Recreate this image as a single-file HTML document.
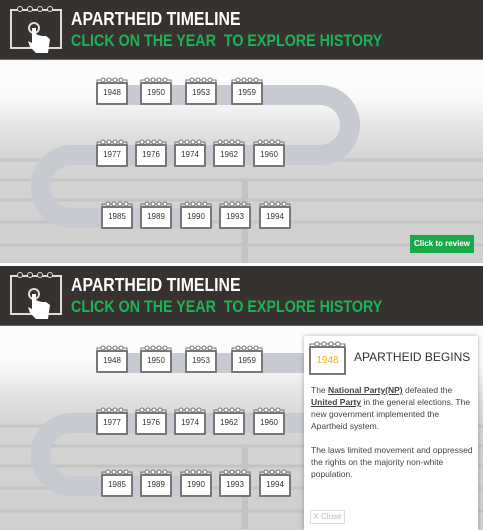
<!DOCTYPE html>
<html><head><style>
*{margin:0;padding:0;box-sizing:border-box}
body{width:483px;height:530px;background:#fff;font-family:"Liberation Sans",sans-serif;position:relative;overflow:hidden}
.panel{position:absolute;left:0;width:483px;height:263px;overflow:hidden;background:linear-gradient(#fff 0,#fbfbfb 95px,#e2e2e2 130px,#d4d4d4 160px,#cfcfcf 100%)}
.hdr{position:absolute;left:0;top:0;width:483px;height:60px;background:#353230;border-bottom:1px solid #5a6a8a}
.t1{position:absolute;left:71px;top:9px;color:#fff;font-weight:bold;font-size:18px;transform:scaleX(.88);transform-origin:left;white-space:nowrap}
.t2{position:absolute;left:71px;top:31px;color:#1db355;font-weight:bold;font-size:17px;transform:scaleX(.84);transform-origin:left;white-space:nowrap}
.cal{position:absolute;width:32px;height:28px}
.cal .b{position:absolute;left:0;top:5px;width:32px;height:23px;border:2px solid #777;background:#fff;font-size:8px;text-align:center;line-height:18px;color:#333;border-radius:1px}
.cal svg{position:absolute;left:0;top:0}
</style></head><body>

<svg width="0" height="0" style="position:absolute"><defs>
<g id="rings"><path d="M1 6 V3 H31 V6" fill="none" stroke="#777" stroke-width="1"/><circle cx="7" cy="3" r="2" fill="#fff" stroke="#777"/><circle cx="13" cy="3" r="2" fill="#fff" stroke="#777"/><circle cx="19" cy="3" r="2" fill="#fff" stroke="#777"/><circle cx="25" cy="3" r="2" fill="#fff" stroke="#777"/></g>
</defs></svg>

<div class="panel" style="top:0">
<svg width="483" height="263" style="position:absolute;left:0;top:0">
<g stroke="#bcbcbc" stroke-width="3" opacity=".6">
<line x1="0" y1="160" x2="483" y2="160"/><line x1="0" y1="180" x2="483" y2="180"/><line x1="0" y1="200" x2="483" y2="200"/><line x1="0" y1="222" x2="483" y2="222"/><line x1="0" y1="245" x2="483" y2="245"/>
<line x1="245" y1="180" x2="245" y2="263" stroke-width="6"/>
</g>
<path d="M110 95 H320 A30 30 0 0 1 320 155 H72 A31.5 31.5 0 0 0 72 218 H200" fill="none" stroke="#c8cad2" stroke-width="20"/>
</svg>
<div class="hdr"><svg width="60" height="55" style="position:absolute;left:8px;top:3px"><rect x="3" y="7" width="50" height="38" fill="none" stroke="#ddd" stroke-width="2"/><path d="M3 7 H53" stroke="#ddd"/><circle cx="12" cy="6" r="2.5" fill="#353230" stroke="#ddd"/><circle cx="22" cy="6" r="2.5" fill="#353230" stroke="#ddd"/><circle cx="32" cy="6" r="2.5" fill="#353230" stroke="#ddd"/><circle cx="42" cy="6" r="2.5" fill="#353230" stroke="#ddd"/><circle cx="26" cy="25" r="5" fill="none" stroke="#ddd" stroke-width="2"/><path d="M24 25 V40 L20 38 L22 44 L28 50 H40 L42 36 L38 33 L34 33 L30 32 L28 31 V25 Z" fill="#fff"/></svg>
<div class="t1">APARTHEID TIMELINE</div><div class="t2">CLICK ON THE YEAR&nbsp; TO EXPLORE HISTORY</div></div>
<div class="cal" style="left:96px;top:77px"><div class="b">1948</div><svg width="32" height="8"><use href="#rings"/></svg></div>
<div class="cal" style="left:140px;top:77px"><div class="b">1950</div><svg width="32" height="8"><use href="#rings"/></svg></div>
<div class="cal" style="left:185px;top:77px"><div class="b">1953</div><svg width="32" height="8"><use href="#rings"/></svg></div>
<div class="cal" style="left:231px;top:77px"><div class="b">1959</div><svg width="32" height="8"><use href="#rings"/></svg></div>
<div class="cal" style="left:96px;top:139px"><div class="b">1977</div><svg width="32" height="8"><use href="#rings"/></svg></div>
<div class="cal" style="left:135px;top:139px"><div class="b">1976</div><svg width="32" height="8"><use href="#rings"/></svg></div>
<div class="cal" style="left:174px;top:139px"><div class="b">1974</div><svg width="32" height="8"><use href="#rings"/></svg></div>
<div class="cal" style="left:213px;top:139px"><div class="b">1962</div><svg width="32" height="8"><use href="#rings"/></svg></div>
<div class="cal" style="left:253px;top:139px"><div class="b">1960</div><svg width="32" height="8"><use href="#rings"/></svg></div>
<div class="cal" style="left:101px;top:201px"><div class="b">1985</div><svg width="32" height="8"><use href="#rings"/></svg></div>
<div class="cal" style="left:140px;top:201px"><div class="b">1989</div><svg width="32" height="8"><use href="#rings"/></svg></div>
<div class="cal" style="left:180px;top:201px"><div class="b">1990</div><svg width="32" height="8"><use href="#rings"/></svg></div>
<div class="cal" style="left:219px;top:201px"><div class="b">1993</div><svg width="32" height="8"><use href="#rings"/></svg></div>
<div class="cal" style="left:259px;top:201px"><div class="b">1994</div><svg width="32" height="8"><use href="#rings"/></svg></div>
<div style="position:absolute;left:410px;top:235px;width:64px;height:18px;background:#1aa84c;color:#fff;font-size:8px;font-weight:bold;text-align:center;line-height:18px">Click to review</div>
</div>

<div class="panel" style="top:266px;height:264px">
<svg width="483" height="264" style="position:absolute;left:0;top:0">
<g stroke="#bcbcbc" stroke-width="3" opacity=".6">
<line x1="0" y1="160" x2="483" y2="160"/><line x1="0" y1="180" x2="483" y2="180"/><line x1="0" y1="200" x2="483" y2="200"/><line x1="0" y1="222" x2="483" y2="222"/><line x1="0" y1="245" x2="483" y2="245"/>
<line x1="245" y1="180" x2="245" y2="263" stroke-width="6"/>
</g>
<path d="M110 97 H320 A30 30 0 0 1 320 157 H72 A31.5 31.5 0 0 0 72 220 H200" fill="none" stroke="#c8cad2" stroke-width="20"/>
</svg>
<div class="hdr"><svg width="60" height="55" style="position:absolute;left:8px;top:3px"><rect x="3" y="7" width="50" height="38" fill="none" stroke="#ddd" stroke-width="2"/><circle cx="12" cy="6" r="2.5" fill="#353230" stroke="#ddd"/><circle cx="22" cy="6" r="2.5" fill="#353230" stroke="#ddd"/><circle cx="32" cy="6" r="2.5" fill="#353230" stroke="#ddd"/><circle cx="42" cy="6" r="2.5" fill="#353230" stroke="#ddd"/><circle cx="26" cy="25" r="5" fill="none" stroke="#ddd" stroke-width="2"/><path d="M24 25 V40 L20 38 L22 44 L28 50 H40 L42 36 L38 33 L34 33 L30 32 L28 31 V25 Z" fill="#fff"/></svg>
<div class="t1">APARTHEID TIMELINE</div><div class="t2">CLICK ON THE YEAR&nbsp; TO EXPLORE HISTORY</div></div>
<div class="cal" style="left:96px;top:79px"><div class="b">1948</div><svg width="32" height="8"><use href="#rings"/></svg></div>
<div class="cal" style="left:140px;top:79px"><div class="b">1950</div><svg width="32" height="8"><use href="#rings"/></svg></div>
<div class="cal" style="left:185px;top:79px"><div class="b">1953</div><svg width="32" height="8"><use href="#rings"/></svg></div>
<div class="cal" style="left:231px;top:79px"><div class="b">1959</div><svg width="32" height="8"><use href="#rings"/></svg></div>
<div class="cal" style="left:96px;top:141px"><div class="b">1977</div><svg width="32" height="8"><use href="#rings"/></svg></div>
<div class="cal" style="left:135px;top:141px"><div class="b">1976</div><svg width="32" height="8"><use href="#rings"/></svg></div>
<div class="cal" style="left:174px;top:141px"><div class="b">1974</div><svg width="32" height="8"><use href="#rings"/></svg></div>
<div class="cal" style="left:213px;top:141px"><div class="b">1962</div><svg width="32" height="8"><use href="#rings"/></svg></div>
<div class="cal" style="left:253px;top:141px"><div class="b">1960</div><svg width="32" height="8"><use href="#rings"/></svg></div>
<div class="cal" style="left:101px;top:203px"><div class="b">1985</div><svg width="32" height="8"><use href="#rings"/></svg></div>
<div class="cal" style="left:140px;top:203px"><div class="b">1989</div><svg width="32" height="8"><use href="#rings"/></svg></div>
<div class="cal" style="left:180px;top:203px"><div class="b">1990</div><svg width="32" height="8"><use href="#rings"/></svg></div>
<div class="cal" style="left:219px;top:203px"><div class="b">1993</div><svg width="32" height="8"><use href="#rings"/></svg></div>
<div class="cal" style="left:259px;top:203px"><div class="b">1994</div><svg width="32" height="8"><use href="#rings"/></svg></div>
<div style="position:absolute;left:304px;top:70px;width:174px;height:194px;background:#fff;box-shadow:0 0 4px rgba(0,0,0,.3)">
 <div class="cal" style="left:5px;top:5px;width:37px;height:34px"><div class="b" style="width:37px;height:29px;line-height:25px;font-size:10px;color:#f0b400">1948</div><svg width="37" height="8" viewBox="0 0 32 8" preserveAspectRatio="none"><use href="#rings"/></svg></div>
 <div style="position:absolute;left:50px;top:14px;font-size:12px;color:#333">APARTHEID BEGINS</div>
 <div style="position:absolute;left:7px;top:48px;width:165px;font-size:8.5px;line-height:12px;color:#444">The <b><u>National Party(NP)</u></b> defeated the <b><u>United Party</u></b> in the general elections. The new government implemented the Apartheid system.<br><br>The laws limited movement and oppressed the rights on the majority non-white population.</div>
 <div style="position:absolute;left:6px;top:174px;width:35px;height:14px;border:1px solid #ddd;color:#bbb;font-size:8px;line-height:12px;text-align:center">X Close</div>
</div>
</div>
</body></html>
